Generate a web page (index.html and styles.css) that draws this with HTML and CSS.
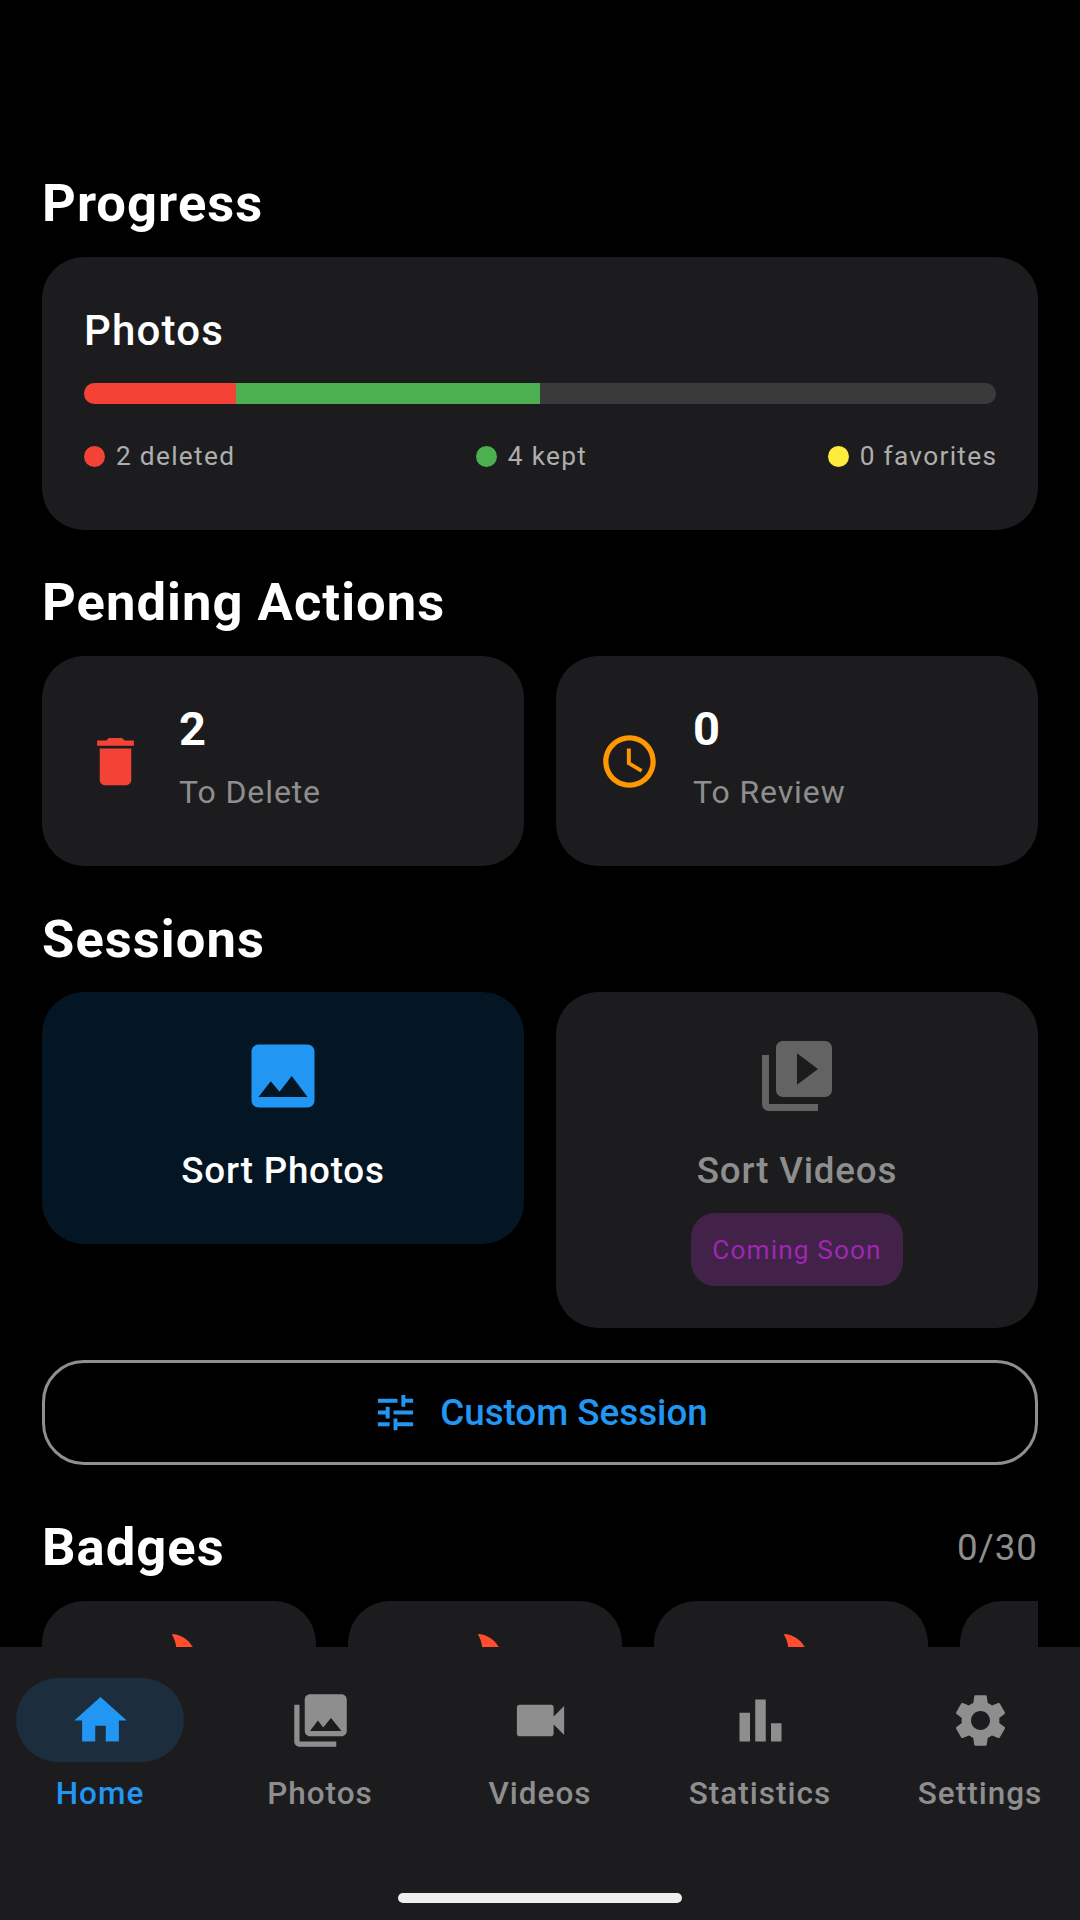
FILE: index.html
```html
<!DOCTYPE html>
<html lang="en">
<head>
<meta charset="utf-8">
<title>Home</title>
<link rel="stylesheet" href="styles.css">
</head>
<body>
<div class="app">
  <main class="content">
    <h2 class="heading">Progress</h2>
    <section class="card progress">
      <div class="progress-title">Photos</div>
      <div class="bar"><div class="bar-deleted"></div><div class="bar-kept"></div></div>
      <div class="legend">
        <div class="legend-item"><span class="dot dot-red"></span>2 deleted</div>
        <div class="legend-item"><span class="dot dot-green"></span>4 kept</div>
        <div class="legend-item"><span class="dot dot-yellow"></span>0 favorites</div>
      </div>
    </section>

    <h2 class="heading heading-pending">Pending Actions</h2>
    <div class="two">
      <div class="card action">
        <svg class="icon-63 red" viewBox="0 0 24 24"><path d="M6 19c0 1.1.9 2 2 2h8c1.1 0 2-.9 2-2V7H6v12zM19 4h-3.5l-1-1h-5l-1 1H5v2h14V4z"/></svg>
        <div class="action-text"><div class="action-num">2</div><div class="action-label">To Delete</div></div>
      </div>
      <div class="card action">
        <svg class="icon-63 orange" viewBox="0 0 24 24"><path d="M11.99 2C6.47 2 2 6.48 2 12s4.47 10 9.99 10C17.52 22 22 17.52 22 12S17.52 2 11.99 2zM12 20c-4.42 0-8-3.58-8-8s3.58-8 8-8 8 3.58 8 8-3.58 8-8 8zm.5-13H11v6l5.25 3.15.75-1.23-4.5-2.67z"/></svg>
        <div class="action-text"><div class="action-num">0</div><div class="action-label">To Review</div></div>
      </div>
    </div>

    <h2 class="heading heading-sessions">Sessions</h2>
    <div class="two two-top">
      <div class="card session session-active">
        <svg class="icon-84 blue" viewBox="0 0 24 24"><path d="M19 3H5c-1.1 0-2 .9-2 2v14c0 1.1.9 2 2 2h14c1.1 0 2-.9 2-2V5c0-1.1-.9-2-2-2zM8.5 13.5l2.5 3.01L14.5 12l4.5 6H5l3.5-4.5z"/></svg>
        <div class="session-label">Sort Photos</div>
      </div>
      <div class="card session">
        <svg class="icon-84 dim" viewBox="0 0 24 24"><path d="M4 6H2v14c0 1.1.9 2 2 2h14v-2H4V6zm16-4H8c-1.1 0-2 .9-2 2v12c0 1.1.9 2 2 2h12c1.1 0 2-.9 2-2V4c0-1.1-.9-2-2-2zm-8 12.5v-9l6 4.5-6 4.5z"/></svg>
        <div class="session-label session-label-off">Sort Videos</div>
        <div class="soon">Coming Soon</div>
      </div>
    </div>

    <button class="custom">
      <svg class="icon-47 blue" viewBox="0 0 24 24"><path d="M3 17v2h6v-2H3zM3 5v2h10V5H3zm10 16v-2h8v-2h-8v-2h-2v6h2zM7 9v2H3v2h4v2h2V9H7zm14 4v-2H11v2h10zm-6-4h2V7h4V5h-4V3h-2v6z"/></svg>
      <span>Custom Session</span>
    </button>

    <div class="badges-head">
      <h2 class="heading">Badges</h2>
      <span class="badges-count">0/30</span>
    </div>
    <div class="badges">
      <div class="card badge"><svg class="flame" viewBox="0 0 40 60"><path d="M0 .8Q0 0 1 0C9 1 16 5 20 12C28 20 36 34 36 44C36 54 26 60 16 60C8 60 4 40 4 12C3.500 8 2 4 0 .8z"/></svg></div>
      <div class="card badge"><svg class="flame" viewBox="0 0 40 60"><path d="M0 .8Q0 0 1 0C9 1 16 5 20 12C28 20 36 34 36 44C36 54 26 60 16 60C8 60 4 40 4 12C3.500 8 2 4 0 .8z"/></svg></div>
      <div class="card badge"><svg class="flame" viewBox="0 0 40 60"><path d="M0 .8Q0 0 1 0C9 1 16 5 20 12C28 20 36 34 36 44C36 54 26 60 16 60C8 60 4 40 4 12C3.500 8 2 4 0 .8z"/></svg></div>
      <div class="card badge"></div>
    </div>
  </main>

  <nav class="nav">
    <div class="tabs">
      <div class="tab tab-active">
        <div class="tab-icon"><svg class="icon-63" viewBox="0 0 24 24"><path d="M10 20v-6h4v6h5v-8h3L12 3 2 12h3v8z"/></svg></div>
        <div class="tab-label">Home</div>
      </div>
      <div class="tab">
        <div class="tab-icon"><svg class="icon-63" viewBox="0 0 24 24"><path d="M22 16V4c0-1.1-.9-2-2-2H8c-1.1 0-2 .9-2 2v12c0 1.1.9 2 2 2h12c1.1 0 2-.9 2-2zm-11-4l2.030 2.710L16 11l4 5H8l3-4zM2 6v14c0 1.1.9 2 2 2h14v-2H4V6H2z"/></svg></div>
        <div class="tab-label">Photos</div>
      </div>
      <div class="tab">
        <div class="tab-icon"><svg class="icon-63" viewBox="0 0 24 24"><path d="M17 10.500V7c0-.55-.45-1-1-1H4c-.55 0-1 .45-1 1v10c0 .55.45 1 1 1h12c.55 0 1-.45 1-1v-3.500l4 4v-11l-4 4z"/></svg></div>
        <div class="tab-label">Videos</div>
      </div>
      <div class="tab">
        <div class="tab-icon"><svg class="icon-63" viewBox="0 0 24 24"><path d="M4 9h4v11H4zm12 4h4v7h-4zm-6-9h4v16h-4z"/></svg></div>
        <div class="tab-label">Statistics</div>
      </div>
      <div class="tab">
        <div class="tab-icon"><svg class="icon-63" viewBox="0 0 24 24"><path d="M19.14 12.94c.04-.3.06-.61.06-.94 0-.32-.02-.64-.07-.94l2.03-1.58c.18-.14.23-.41.12-.61l-1.92-3.32c-.12-.22-.37-.29-.59-.22l-2.39.96c-.5-.38-1.03-.7-1.62-.94l-.36-2.54c-.04-.24-.24-.41-.48-.41h-3.84c-.24 0-.43.17-.47.41l-.36 2.54c-.59.24-1.13.57-1.62.94l-2.39-.96c-.22-.08-.47 0-.59.22L2.74 8.87c-.12.21-.08.47.12.61l2.03 1.58c-.05.3-.09.63-.09.94s.02.64.07.94l-2.03 1.58c-.18.14-.23.41-.12.61l1.92 3.32c.12.22.37.29.59.22l2.39-.96c.5.38 1.03.7 1.62.94l.36 2.54c.05.24.24.41.48.41h3.84c.24 0 .44-.17.47-.41l.36-2.54c.59-.24 1.13-.56 1.62-.94l2.39.96c.22.08.47 0 .59-.22l1.92-3.32c.12-.22.07-.47-.12-.61l-2.01-1.58zM12 15.6c-1.98 0-3.6-1.62-3.6-3.6s1.62-3.6 3.6-3.6 3.6 1.62 3.6 3.6-1.62 3.6-3.6 3.6z"/></svg></div>
        <div class="tab-label">Settings</div>
      </div>
    </div>
    <div class="home-indicator"></div>
  </nav>
</div>
</body>
</html>
```

FILE: styles.css
```css
* { box-sizing: border-box; margin: 0; padding: 0; }
html, body { width: 1080px; height: 1920px; background: #000; overflow: hidden; }
body { font-family: Roboto, "Noto Sans", sans-serif; color: #fff; }
svg { display: block; fill: currentColor; flex: none; }

.app { width: 1080px; height: 1920px; display: flex; flex-direction: column; }
.content { height: 1647px; padding: 170px 42px 0; overflow: hidden; flex: none; }
.nav { height: 273px; background: #1c1c1e; flex: none; display: flex; flex-direction: column; align-items: center; }

.heading { font-size: 52.5px; line-height: 66px; font-weight: 700; letter-spacing: 1.05px; }
.heading-pending { margin-top: 39px; }
.heading-sessions { margin-top: 40px; }

.card { background: #1c1c1e; border-radius: 42px; }

.progress { margin-top: 21px; height: 273px; padding: 42px; }
.progress-title { font-size: 42px; line-height: 64px; font-weight: 500; letter-spacing: 1.2px; }
.bar { margin-top: 20px; height: 21px; border-radius: 10.5px; background: #3a3a3a; overflow: hidden; display: flex; }
.bar-deleted { width: 152px; background: #f44336; }
.bar-kept { width: 304px; background: #4caf50; }
.legend { margin: 32px -1.3px 0 0; display: flex; justify-content: space-between; }
.legend-item { display: flex; align-items: center; gap: 11px; font-size: 26.25px; line-height: 40px; color: #aeaeae; letter-spacing: 1.3px; }
.dot { width: 21px; height: 21px; border-radius: 50%; }
.dot-red { background: #f44336; }
.dot-green { background: #4caf50; }
.dot-yellow { background: #ffeb3b; }

.two { margin-top: 21px; display: grid; grid-template-columns: 1fr 1fr; gap: 32px; }
.two-top { margin-top: 20px; align-items: start; }

.action { height: 210px; padding: 0 42px; display: flex; align-items: center; gap: 32px; }
.action-text { padding-bottom: 10px; }
.action-num { margin-top: 1px; font-size: 47px; line-height: 56px; font-weight: 700; }
.action-label { margin-top: 15px; font-size: 32px; line-height: 40px; color: #8e8e8e; letter-spacing: .9px; }

.icon-63 { width: 63px; height: 63px; }
.icon-84 { width: 84px; height: 84px; }
.icon-47 { width: 47px; height: 47px; }
.red { color: #f44336; }
.orange { color: #ff9800; }
.blue { color: #2196f3; }
.dim { color: #636363; }
.flame { width: 40px; height: 60px; margin: 33px 0 0 130px; color: #ff4d2e; }

.session { min-height: 252px; padding: 42px; display: flex; flex-direction: column; align-items: center; }
.session-active { background: #041623; }
.session-label { margin-top: 31px; font-size: 36.75px; line-height: 44px; font-weight: 500; letter-spacing: .8px; }
.session-label-off { color: #8e8e8e; }
.soon { margin-top: 20px; height: 73px; width: 212px; border-radius: 24px; background: #43224a; color: #9c27b0; font-size: 26.25px; letter-spacing: 1.1px; display: flex; align-items: center; justify-content: center; }

.custom { margin-top: 32px; width: 996px; height: 105px; background: transparent; border: 3px solid #8e8e93; border-radius: 42px; display: flex; align-items: center; justify-content: center; gap: 21px; color: #2196f3; font: 500 36.75px Roboto, sans-serif; }

.badges-head { margin-top: 49px; display: flex; justify-content: space-between; align-items: center; }
.badges-count { font-size: 36.75px; color: #8e8e8e; letter-spacing: 1px; }
.badges { margin-top: 21px; display: flex; gap: 32px; overflow: hidden; }
.badge { width: 274px; height: 200px; flex: none; overflow: hidden; }

.tabs { width: 100%; padding-top: 31px; display: flex; gap: 20px; }
.tab { width: 200px; display: flex; flex-direction: column; align-items: center; color: #8e8e8e; }
.tab-icon { width: 168px; height: 84px; border-radius: 42px; display: flex; align-items: center; justify-content: center; }
.tab-label { margin-top: 11px; font-size: 31.5px; line-height: 42px; font-weight: 500; letter-spacing: 1px; }
.tab-active { color: #2196f3; }
.tab-active .tab-icon { background: #1c2d3d; }
.home-indicator { margin-top: 78px; width: 284px; height: 10px; border-radius: 5px; background: #eee; }
```
